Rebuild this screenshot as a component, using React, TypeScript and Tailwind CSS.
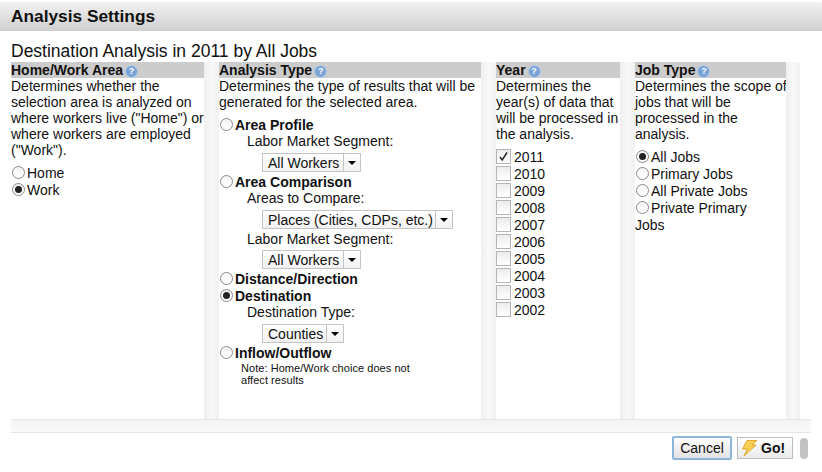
const Help = () => (
  <span className="ml-[2px] inline-flex h-[13px] w-[13px] items-center justify-center rounded-full border border-[#b3cbe8] bg-[#7ba3d6] align-[1px] text-[9px] font-bold leading-none text-white">
    ?
  </span>
);

const Radio = ({ checked = false }: { checked?: boolean }) => (
  <span className="ml-[1px] mr-[2px] inline-flex h-[13px] w-[13px] shrink-0 items-center justify-center rounded-full border border-[#8a8a8a] bg-gradient-to-b from-[#f4f4f4] to-white">
    {checked && <span className="h-[7px] w-[7px] rounded-full bg-[#222]" />}
  </span>
);

const RadioRow = ({ label, checked, bold }: { label: string; checked?: boolean; bold?: boolean }) => (
  <div className={`flex h-[17px] items-center ${bold ? 'font-bold' : ''}`}>
    <Radio checked={checked} />
    <span>{label}</span>
  </div>
);

const Check = ({ label, checked }: { label: string; checked?: boolean }) => (
  <div className="flex h-[17px] items-center">
    <span className="mr-[3px] flex h-[15px] w-[15px] items-center justify-center border border-[#b5b5b5] bg-gradient-to-b from-[#ececec] to-white">
      {checked && (
        <svg width="11" height="11" viewBox="0 0 11 11" fill="none">
          <path d="M2 6l2.2 3L9 1.5" stroke="#222" strokeWidth="1.4" />
        </svg>
      )}
    </span>
    <span>{label}</span>
  </div>
);

const Select = ({ label, width }: { label: string; width: string }) => (
  <div className={`ml-[43px] flex h-[19px] items-center justify-between whitespace-nowrap border border-[#c4c4c4] bg-gradient-to-b from-white to-[#f1f1f1] ${width}`}>
    <span className="pl-[5px]">{label}</span>
    <span className="flex h-full w-[17px] shrink-0 items-center justify-center border-l border-[#c4c4c4]">
      <span className="h-0 w-0 border-x-[4px] border-t-[4px] border-x-transparent border-t-black" />
    </span>
  </div>
);

const Gutter = ({ width }: { width: string }) => (
  <div className={`shrink-0 bg-gradient-to-r from-[#efefef] via-[#f8f8f8] to-[#f1f1f1] ${width}`} />
);

const Column = ({ title, width, children }: { title: string; width: string; children: React.ReactNode }) => (
  <div className={`shrink-0 whitespace-nowrap ${width}`}>
    <div className="h-[16px] overflow-hidden bg-[#cccccc] font-bold leading-[16px]">
      {title}
      <Help />
    </div>
    {children}
  </div>
);

const years = ['2010', '2009', '2008', '2007', '2006', '2005', '2004', '2003', '2002'];

export default function App() {
  return (
    <div className="h-[472px] w-[822px] overflow-hidden bg-white pt-[2px] font-['Liberation_Sans',Arial,sans-serif] text-[14px] leading-[16px] text-[#111]">
      <div className="h-[29px] bg-gradient-to-b from-[#f2f2f2] to-[#cfcfcf] pl-[11px] text-[17.3px] font-bold leading-[29px]">
        Analysis Settings
      </div>
      <div className="pl-[11px] pt-[11px]">
        <div className="h-[20px] text-[17.5px] leading-[19px]">Destination Analysis in 2011 by All Jobs</div>
        <div className="flex h-[357px] w-[800px]">
          <Column title="Home/Work Area" width="w-[193px]">
            <p>
              Determines whether the
              <br />
              selection area is analyzed on
              <br />
              where workers live ("Home") or
              <br />
              where workers are employed
              <br />
              ("Work").
            </p>
            <div className="mt-[6px]">
              <RadioRow label="Home" />
              <RadioRow label="Work" checked />
            </div>
          </Column>
          <Gutter width="w-[15px]" />
          <Column title="Analysis Type" width="w-[262px]">
            <p>
              Determines the type of results that will be
              <br />
              generated for the selected area.
            </p>
            <div className="mt-[6px]">
              <RadioRow label="Area Profile" bold />
              <div className="ml-[28px] h-[17px] leading-[17px]">Labor Market Segment:</div>
              <div className="mt-[3px] mb-[1px]"><Select label="All Workers" width="w-[99px]" /></div>
              <RadioRow label="Area Comparison" bold />
              <div className="ml-[28px] h-[17px] leading-[17px]">Areas to Compare:</div>
              <div className="mt-[3px] mb-[2px]"><Select label="Places (Cities, CDPs, etc.)" width="w-[191px]" /></div>
              <div className="ml-[28px] h-[17px] leading-[17px]">Labor Market Segment:</div>
              <div className="mt-[2px] mb-[1px]"><Select label="All Workers" width="w-[99px]" /></div>
              <RadioRow label="Distance/Direction" bold />
              <RadioRow label="Destination" checked bold />
              <div className="ml-[28px] h-[17px] leading-[17px]">Destination Type:</div>
              <div className="mt-[3px] mb-[1px]"><Select label="Counties" width="w-[82px]" /></div>
              <RadioRow label="Inflow/Outflow" bold />
              <p className="ml-[22px] mt-[1px] text-[11px] leading-[12px] tracking-[0.05px]">
                Note: Home/Work choice does not
                <br />
                affect results
              </p>
            </div>
          </Column>
          <Gutter width="w-[15px]" />
          <Column title="Year" width="w-[124px]">
            <p>
              Determines the
              <br />
              year(s) of data that
              <br />
              will be processed in
              <br />
              the analysis.
            </p>
            <div className="mt-[6px]">
              <Check label="2011" checked />
              {years.map((y) => (
                <Check key={y} label={y} />
              ))}
            </div>
          </Column>
          <Gutter width="w-[15px]" />
          <Column title="Job Type" width="w-[151px]">
            <p>
              Determines the scope of
              <br />
              jobs that will be
              <br />
              processed in the
              <br />
              analysis.
            </p>
            <div className="mt-[6px]">
              <RadioRow label="All Jobs" checked />
              <RadioRow label="Primary Jobs" />
              <RadioRow label="All Private Jobs" />
              <RadioRow label="Private Primary" />
              <div className="mt-[1px] h-[17px] leading-[17px]">Jobs</div>
            </div>
          </Column>
          <Gutter width="w-[14px]" />
        </div>
        <div className="h-[14px] w-[800px] border-y border-[#e4e4e4] bg-gradient-to-b from-[#f3f3f3] to-[#fafafa]" />
        <div className="flex w-[800px] items-center justify-end pr-[3px] pt-[3px]">
          <button className="flex h-[24px] w-[60px] items-center justify-center rounded-[2px] border-2 border-[#8db4dc] bg-gradient-to-b from-white to-[#e2e2e2] text-[14px]">
            Cancel
          </button>
          <button className="ml-[5px] flex h-[22px] w-[56px] items-center gap-[3px] border border-[#bdbdbd] bg-gradient-to-b from-white to-[#eaeaea] pl-[3px] text-[14px] font-bold">
            <svg width="17" height="18" viewBox="0 0 17 18">
              <path d="M6 1.5h10L11 6h4L3 17l3.5-7H1.5z" fill="#f7cf55" stroke="#e3a52a" strokeWidth="1" />
            </svg>
            Go!
          </button>
          <div className="ml-[7px] h-[21px] w-[8px] rounded-[4px] bg-[#c2c2c2]" />
        </div>
      </div>
    </div>
  );
}
